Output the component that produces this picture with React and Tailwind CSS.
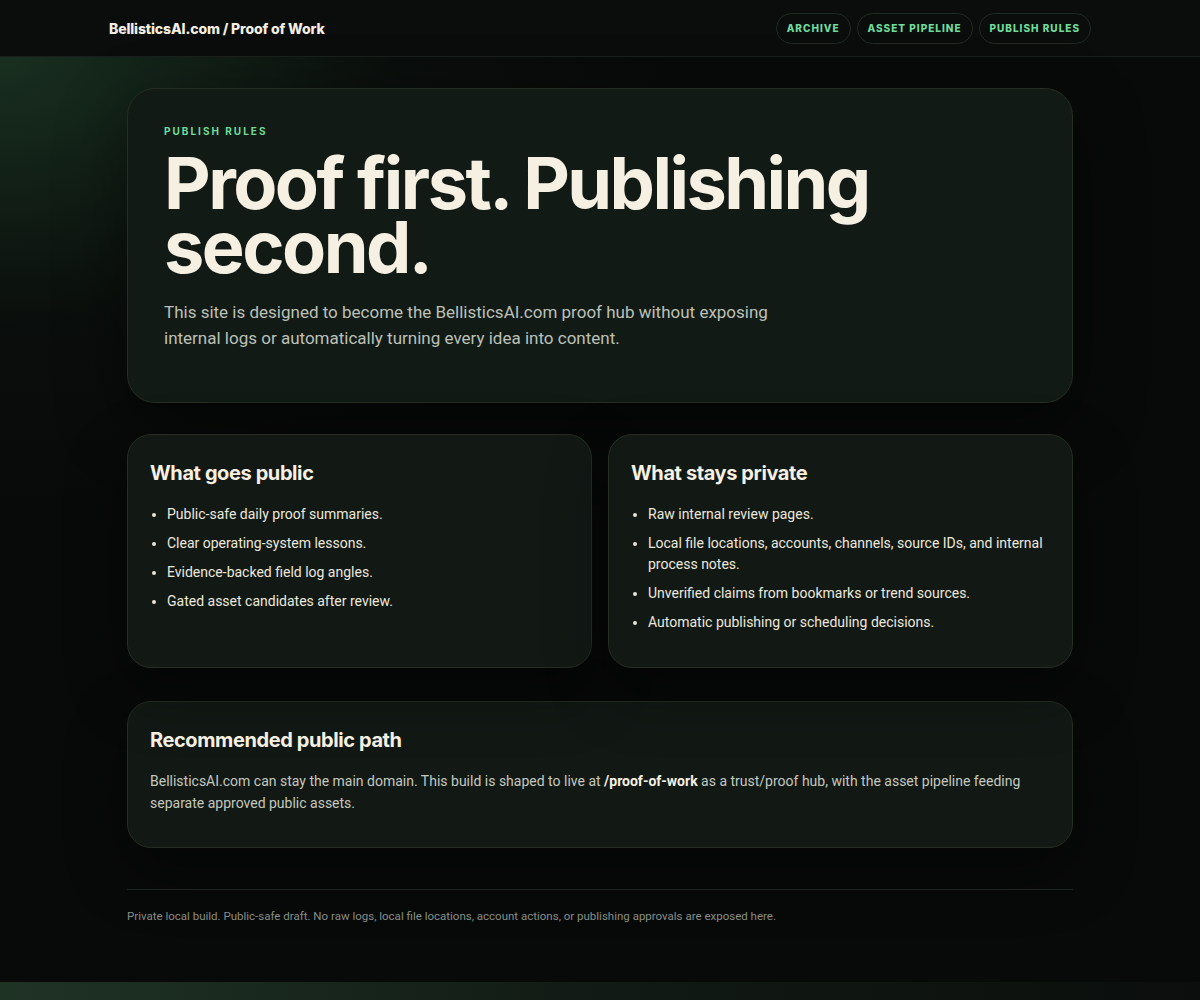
import React from 'react';

const publicItems = [
    'Public-safe daily proof summaries.',
    'Clear operating-system lessons.',
    'Evidence-backed field log angles.',
    'Gated asset candidates after review.',
];

const privateItems = [
    'Raw internal review pages.',
    'Local file locations, accounts, channels, source IDs, and internal process notes.',
    'Unverified claims from bookmarks or trend sources.',
    'Automatic publishing or scheduling decisions.',
];

const navLinks = ['Archive', 'Asset pipeline', 'Publish rules'];

function RuleCard({ title, items }) {
    return (
        <div className="rounded-[24px] border border-[#262d24] bg-[#121915] px-[22px] pt-[24px] pb-[34px] shadow-[0_24px_60px_rgba(0,0,0,0.45)]">
            <h2 className="text-[20px] leading-[28px] font-bold tracking-[-0.02em] text-[#f6f0e2]">{title}</h2>
            <ul className="mt-[17px] flex flex-col gap-[8px] pl-[17px] list-disc marker:text-[#e8e4d8]">
                {items.map(item => (
                    <li key={item} className="font-['Roboto','Liberation_Sans',sans-serif] text-[14px] leading-[21px] text-[#ece8dc]">{item}</li>
                ))}
            </ul>
        </div>
    );
}

export default function App() {
    return (
        <div className="min-h-screen bg-[#080a09] font-['Inter','Liberation_Sans',sans-serif]">
            <header className="h-[57px] border-b border-[#1a201b] bg-[#0a0d0b]">
                <div className="mx-auto flex h-full w-[982px] items-center justify-between">
                    <div className="text-[14px] font-extrabold tracking-[-0.01em] text-[#f3eee0]">BellisticsAI.com / Proof of Work</div>
                    <nav className="flex items-center gap-[6px]">
                        {navLinks.map(link => (
                            <a key={link} className="flex h-[31px] items-center rounded-full border border-[#1f2a22] px-[10px] text-[10px] font-extrabold uppercase tracking-[0.1em] text-[#6fdc9b]">
                                {link}
                            </a>
                        ))}
                    </nav>
                </div>
            </header>

            <main className="h-[925px] bg-[radial-gradient(ellipse_900px_600px_at_0%_0%,rgba(38,78,50,0.55),rgba(14,22,17,0.3)_45%,transparent_75%)]">
                <div className="mx-auto w-[946px] pt-[31px]">
                    {/* hero */}
                    <section className="rounded-[28px] border border-[#262e24] bg-[#121a16] px-[36px] pt-[36px] pb-[51px] shadow-[0_24px_70px_rgba(0,0,0,0.45)]">
                        <div className="text-[10px] leading-[12px] font-bold uppercase tracking-[0.2em] text-[#6fdc9b]">Publish rules</div>
                        <h1 className="mt-[14px] text-[72px] leading-[64px] font-bold tracking-[-0.035em] text-[#f6f0e2]">
                            Proof first. Publishing<br />second.
                        </h1>
                        <p className="mt-[20px] max-w-[620px] font-['Roboto','Liberation_Sans',sans-serif] text-[17px] leading-[26px] text-[#bcc1b8]">
                            This site is designed to become the BellisticsAI.com proof hub without exposing internal logs or automatically turning every idea into content.
                        </p>
                    </section>

                    <div className="mt-[31px] grid grid-cols-2 gap-[16px]">
                        <RuleCard title="What goes public" items={publicItems} />
                        <RuleCard title="What stays private" items={privateItems} />
                    </div>

                    <section className="mt-[33px] rounded-[24px] border border-[#262d24] bg-[#121915] px-[22px] pt-[24px] pb-[33px] shadow-[0_24px_60px_rgba(0,0,0,0.45)]">
                        <h2 className="text-[20px] leading-[28px] font-bold tracking-[-0.02em] text-[#f6f0e2]">Recommended public path</h2>
                        <p className="mt-[16px] max-w-[890px] font-['Roboto','Liberation_Sans',sans-serif] text-[14px] leading-[22px] text-[#c4c8bf]">
                            BellisticsAI.com can stay the main domain. This build is shaped to live at <strong className="font-bold text-[#f6f0e2]">/proof-of-work</strong> as a trust/proof hub, with the asset pipeline feeding separate approved public assets.
                        </p>
                    </section>

                    <footer className="mt-[41px] border-t border-[#1d231e] pt-[18px]">
                        <p className="font-['Roboto','Liberation_Sans',sans-serif] text-[11.5px] leading-[16px] text-[#888d86]">
                            Private local build. Public-safe draft. No raw logs, local file locations, account actions, or publishing approvals are exposed here.
                        </p>
                    </footer>
                </div>
            </main>
            <div className="h-[18px] bg-[linear-gradient(90deg,#1f3325,#111a14_50%,#0b0e0c)]"></div>
        </div>
    );
}
